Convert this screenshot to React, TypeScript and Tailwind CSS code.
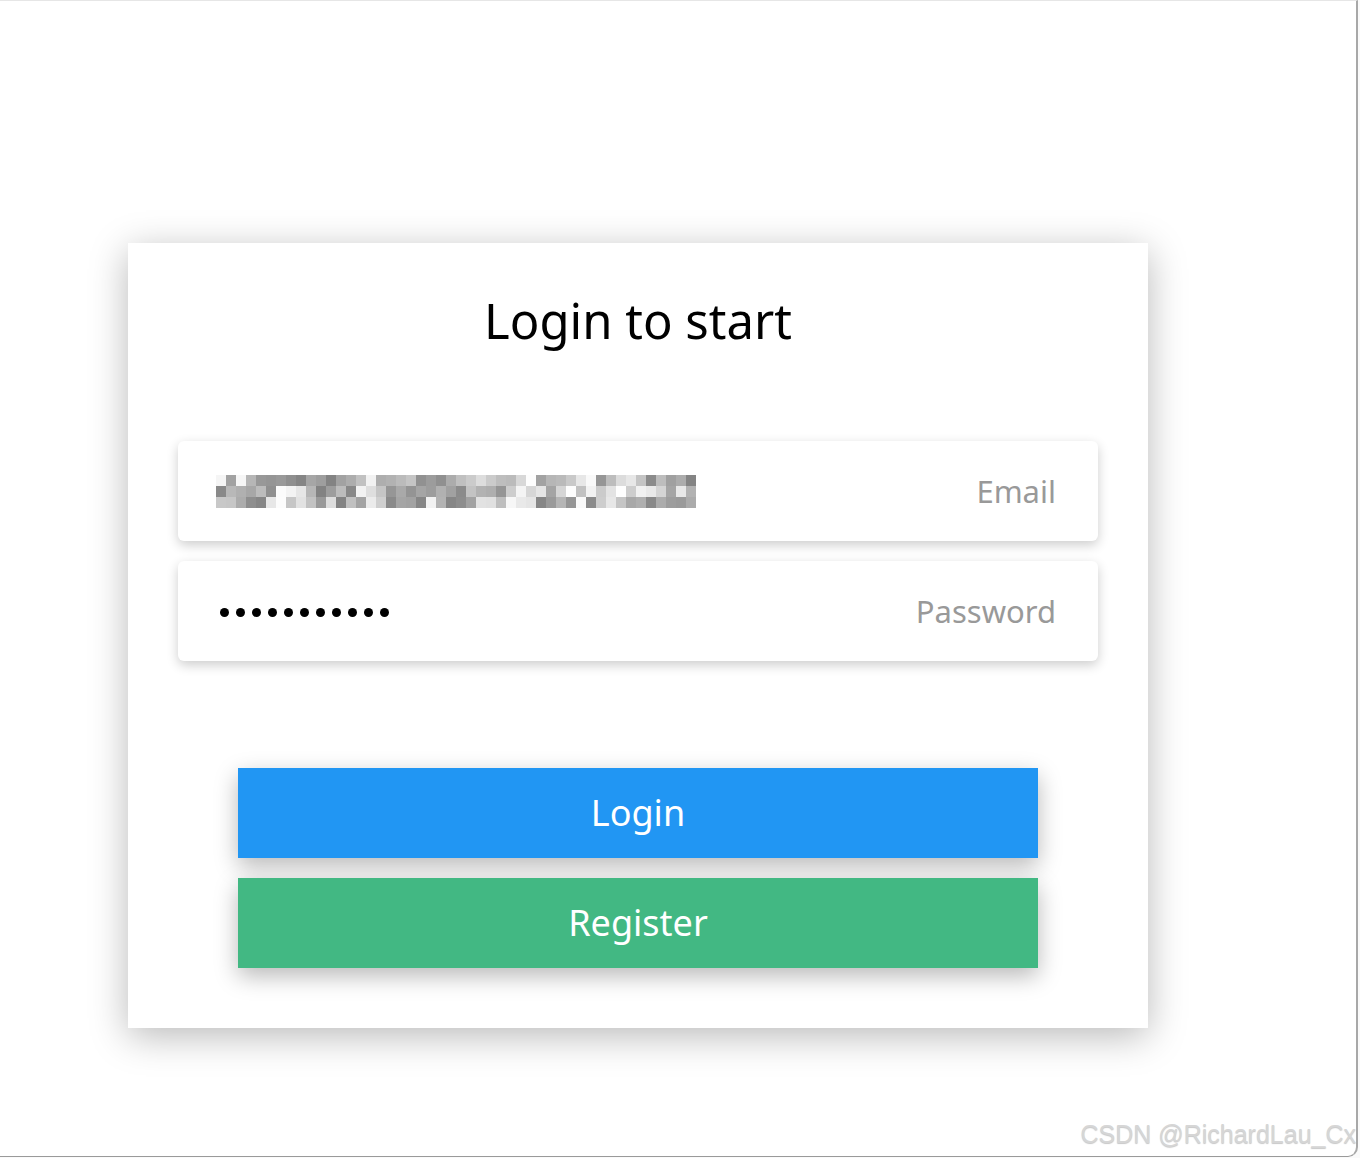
const mosaic = Array.from({ length: 3 }, (_, row) =>
  Array.from({ length: 48 }, (_, col) => {
    const n = Math.abs(Math.sin((row + 1) * 12.9898 + col * 78.233) * 43758.5453) % 1;
    const v = Math.round(130 + n * 125);
    return `rgb(${v},${v},${v})`;
  })
);

function BlurredEmail() {
  return (
    <div className="flex flex-col blur-[0.6px]">
      {mosaic.map((row, r) => (
        <div key={r} className="flex">
          {row.map((c, i) => (
            <span key={i} className="h-[11px] w-[10px]" style={{ backgroundColor: c }} />
          ))}
        </div>
      ))}
    </div>
  );
}

function Field({ label, children }: { label: string; children: React.ReactNode }) {
  return (
    <div className="flex h-[100px] items-center justify-between rounded-[6px] bg-white pl-[38px] pr-[42px] shadow-[0_4px_12px_rgba(0,0,0,0.2)]">
      {children}
      <span className="text-[31px] text-[#999]">{label}</span>
    </div>
  );
}

export default function App() {
  return (
    <div className="relative h-[1158px] w-[1360px] overflow-hidden bg-[#fafafa] font-['Noto_Sans',sans-serif]">
      <div className="h-[1157px] w-[1358px] rounded-br-[10px] border-t border-r-2 border-b border-t-[#e6e6e6] border-r-[#a8a8a8] border-b-[#9a9a9a] bg-white pl-[128px] pt-[242px]">
        <div className="flex h-[785px] w-[1020px] flex-col bg-white shadow-[0_8px_36px_rgba(0,0,0,0.28)]">
          <h1 className="mt-[41px] text-center text-[49px] leading-[72px] font-normal text-black">
            Login to start
          </h1>
          <div className="mx-[50px] mt-[85px] flex flex-col gap-[20px]">
            <Field label="Email">
              <BlurredEmail />
            </Field>
            <Field label="Password">
              <div className="mt-[3px] ml-[4px] flex gap-[7px]">
                {Array.from({ length: 11 }, (_, i) => (
                  <span key={i} className="h-[9px] w-[9px] rounded-full bg-black" />
                ))}
              </div>
            </Field>
          </div>
          <div className="mx-[110px] mt-[107px] flex flex-col gap-[20px]">
            <button className="h-[90px] bg-[#2196f3] text-[36px] text-white shadow-[0_8px_22px_rgba(0,0,0,0.28)]">
              Login
            </button>
            <button className="h-[90px] bg-[#42b883] text-[36px] text-white shadow-[0_8px_22px_rgba(0,0,0,0.28)]">
              Register
            </button>
          </div>
        </div>
      </div>
      <span className="absolute top-[1116px] right-[4px] font-['Liberation_Sans',sans-serif] text-[25px] text-[#d6d6d6] [text-shadow:0_1px_1px_rgba(0,0,0,0.22)]">
        CSDN @RichardLau_Cx
      </span>
    </div>
  );
}
